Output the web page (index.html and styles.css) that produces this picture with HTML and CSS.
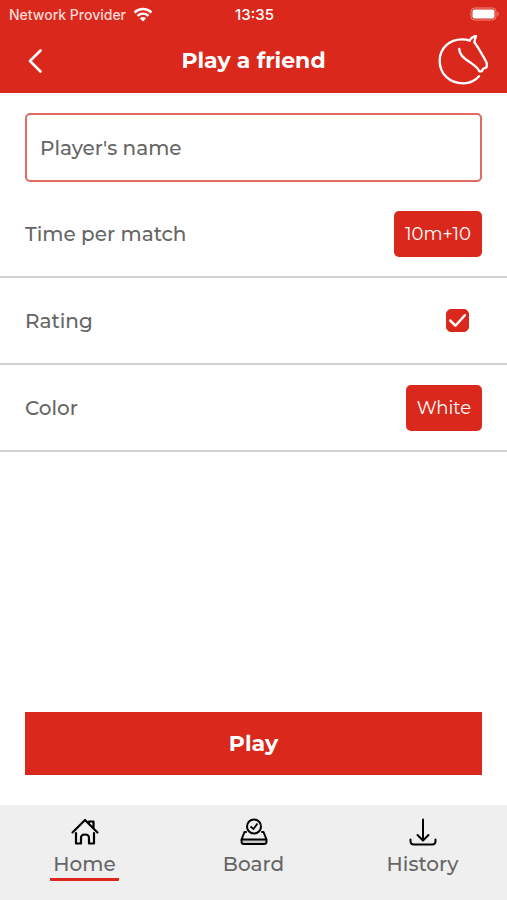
FILE: index.html
```
<!DOCTYPE html>
<html lang="en">
<head>
<meta charset="utf-8">
<meta name="viewport" content="width=device-width, initial-scale=1">
<title>Play a friend</title>
<link rel="stylesheet" href="styles.css">
</head>
<body>
<div class="app">
  <header class="top">
    <div class="status">
      <span class="carrier">Network Provider
        <svg class="wifi" viewBox="0 0 20 15" aria-hidden="true"><path d="M1.500 5.500C6.500 .9 13.500 .9 18.500 5.500M4.500 8.800C7.700 5.900 12.300 5.900 15.500 8.800" fill="none" stroke="currentColor" stroke-width="2.400"/><path d="M6.800 11.200Q10 8.700 13.200 11.200L10 14.500Z" fill="currentColor"/></svg>
      </span>
      <span class="clock">13:35</span>
      <svg class="battery" viewBox="0 0 30 14" aria-hidden="true"><rect x="1" y="1" width="25" height="12" rx="3.500" fill="none" stroke="#ee8d84"/><rect x="2.500" y="2.500" width="22" height="9" rx="2" fill="#fff"/><path d="M27.500 4.500Q30 7 27.500 9.500Z" fill="#ee8d84"/></svg>
    </div>
    <div class="bar">
      <button class="back" type="button" aria-label="Back"><svg viewBox="0 0 16 26" aria-hidden="true"><path d="M13.500 2.500L3 13L13.500 23.500" fill="none" stroke="currentColor" stroke-width="2.600" stroke-linecap="round" stroke-linejoin="round"/></svg></button>
      <h1 class="title">Play a friend</h1>
      <svg class="logo" viewBox="51 104 156 156" aria-hidden="true"><path d="M177 228C165 242 149 249 130 249C88 249 59 220 59 182C59 144 88 117 126 117C134 117 142 118 149 121C152 113 159 109 168 107C165 114 164 120 163 126C173 138 186 162 198 183C202 191 201 196 199 202Q189 203 185 213L178 213C173 200 163 195 150 186C130 173 117 162 118 146" fill="none" stroke="currentColor" stroke-width="7" stroke-linejoin="round" stroke-linecap="round"/></svg>
    </div>
  </header>
  <main class="content">
    <input class="name" type="text" placeholder="Player's name" aria-label="Player's name">
    <div class="row"><span id="time-label">Time per match</span><button class="choice" type="button" aria-describedby="time-label">10m+10</button></div>
    <div class="row"><label for="rating">Rating</label><span class="tick"><input id="rating" type="checkbox" checked><svg viewBox="0 0 22 22" aria-hidden="true"><path d="M4 11L9 16L18 6" fill="none" stroke="#fff" stroke-width="2.400" stroke-linecap="round" stroke-linejoin="round"/></svg></span></div>
    <div class="row"><span id="color-label">Color</span><button class="choice" type="button" aria-describedby="color-label">White</button></div>
    <button class="play" type="button">Play</button>
  </main>
  <nav class="tabs">
    <a class="tab active" href="#home">
      <svg viewBox="0 0 30 30" aria-hidden="true"><path d="M2.500 15.500L15 3L27.500 15.500M19 7V4.500H23.500V11.500M6 16V26.500H11V21Q11 17.500 15 17.500T19 21V26.500H24V16" fill="none" stroke="currentColor" stroke-width="2.200" stroke-linecap="round" stroke-linejoin="round"/></svg>
      <span>Home</span>
    </a>
    <a class="tab" href="#board">
      <svg viewBox="0 0 30 30" aria-hidden="true"><path d="M3 22H27V25Q27 27 25 27H5Q3 27 3 25Z" fill="#c8cbcb"/><path d="M7 15H5.500L2.500 22.500V24.500Q2.500 27 5 27H25Q27.500 27 27.500 24.500V22.500L24.500 15H23M3 22.500H27" fill="none" stroke="currentColor" stroke-width="2" stroke-linecap="round" stroke-linejoin="round"/><circle cx="15" cy="9.500" r="7" fill="#efefef" stroke="currentColor" stroke-width="2"/><path d="M11.500 9.500L14.500 12L18.500 6.500" fill="none" stroke="currentColor" stroke-width="1.800"/></svg>
      <span>Board</span>
    </a>
    <a class="tab" href="#history">
      <svg viewBox="0 0 30 30" aria-hidden="true"><path d="M15 2.500V23M9.500 18L15 23.500L20.500 18M2.500 22.500V24Q2.500 27.500 6 27.500H24Q27.500 27.500 27.500 24V22.500" fill="none" stroke="currentColor" stroke-width="2" stroke-linecap="round" stroke-linejoin="round"/></svg>
      <span>History</span>
    </a>
  </nav>
</div>
</body>
</html>
```
FILE: styles.css
```
* { box-sizing: border-box; }
body { margin: 0; background: #fff; color: #666; font-family: Montserrat, Inter, sans-serif; font-size: 20px; font-weight: 500; }
button, input { font: inherit; }
button { border: 0; background: #da291c; color: #fff; cursor: pointer; }
svg { display: block; }
.app { display: flex; flex-direction: column; min-height: 100vh; }

.top { background: #da291c; color: #fff; }
.status { display: grid; grid-template-columns: 1fr auto 1fr; align-items: center; height: 28px; padding: 0 7px 0 9px; font-family: Inter, sans-serif; font-size: 15px; }
.carrier { display: flex; align-items: center; gap: 7px; color: #fbd9d6; font-size: 14px; }
.wifi { width: 20px; height: 15px; color: #fff; }
.battery { justify-self: end; width: 30px; height: 14px; }
.bar { display: grid; grid-template-columns: 1fr auto 1fr; align-items: center; height: 65px; padding: 0 18px; }
.back { justify-self: start; padding: 0 9px; }
.back svg { width: 16px; height: 26px; }
.title { margin: 0; font-size: 22px; font-weight: 700; }
.logo { justify-self: end; width: 52px; height: 52px; }

.content { display: flex; flex: 1; flex-direction: column; padding: 20px 0 30px; }
.name { min-width: 0; height: 69px; margin: 0 25px 9px; padding: 0 13px; border: 2px solid #e06b63; border-radius: 5px; background: #fff; color: #666; }
.name::placeholder { color: #666; opacity: 1; }
.row { display: flex; align-items: center; justify-content: space-between; height: 87px; padding: 0 25px; border-bottom: 2px solid #d2d2d2; }
.choice { height: 46px; padding: 0 11px; border-radius: 5px; font-size: 18px; font-weight: 400; }
.tick { display: grid; margin-right: 13px; }
.tick input, .tick svg { grid-area: 1 / 1; width: 23px; height: 23px; margin: 0; }
.tick input { appearance: none; border: 1px solid #da291c; border-radius: 5px; }
.tick input:checked { background: #da291c; }
.tick svg { visibility: hidden; pointer-events: none; }
.tick input:checked + svg { visibility: visible; }
.play { height: 63px; margin: auto 25px 0; font-size: 22px; font-weight: 700; }

.tabs { display: grid; grid-template-columns: repeat(3, 1fr); height: 95px; padding-top: 12px; background: #efefef; }
.tab { display: flex; flex-direction: column; align-items: center; color: #666; text-decoration: none; }
.tab svg { width: 30px; height: 30px; color: #000; }
.tab span { padding: 4px 3px 1px; border-bottom: 3px solid transparent; line-height: 26px; }
.tab.active span { border-color: #da291c; border-radius: 1px; }
```
